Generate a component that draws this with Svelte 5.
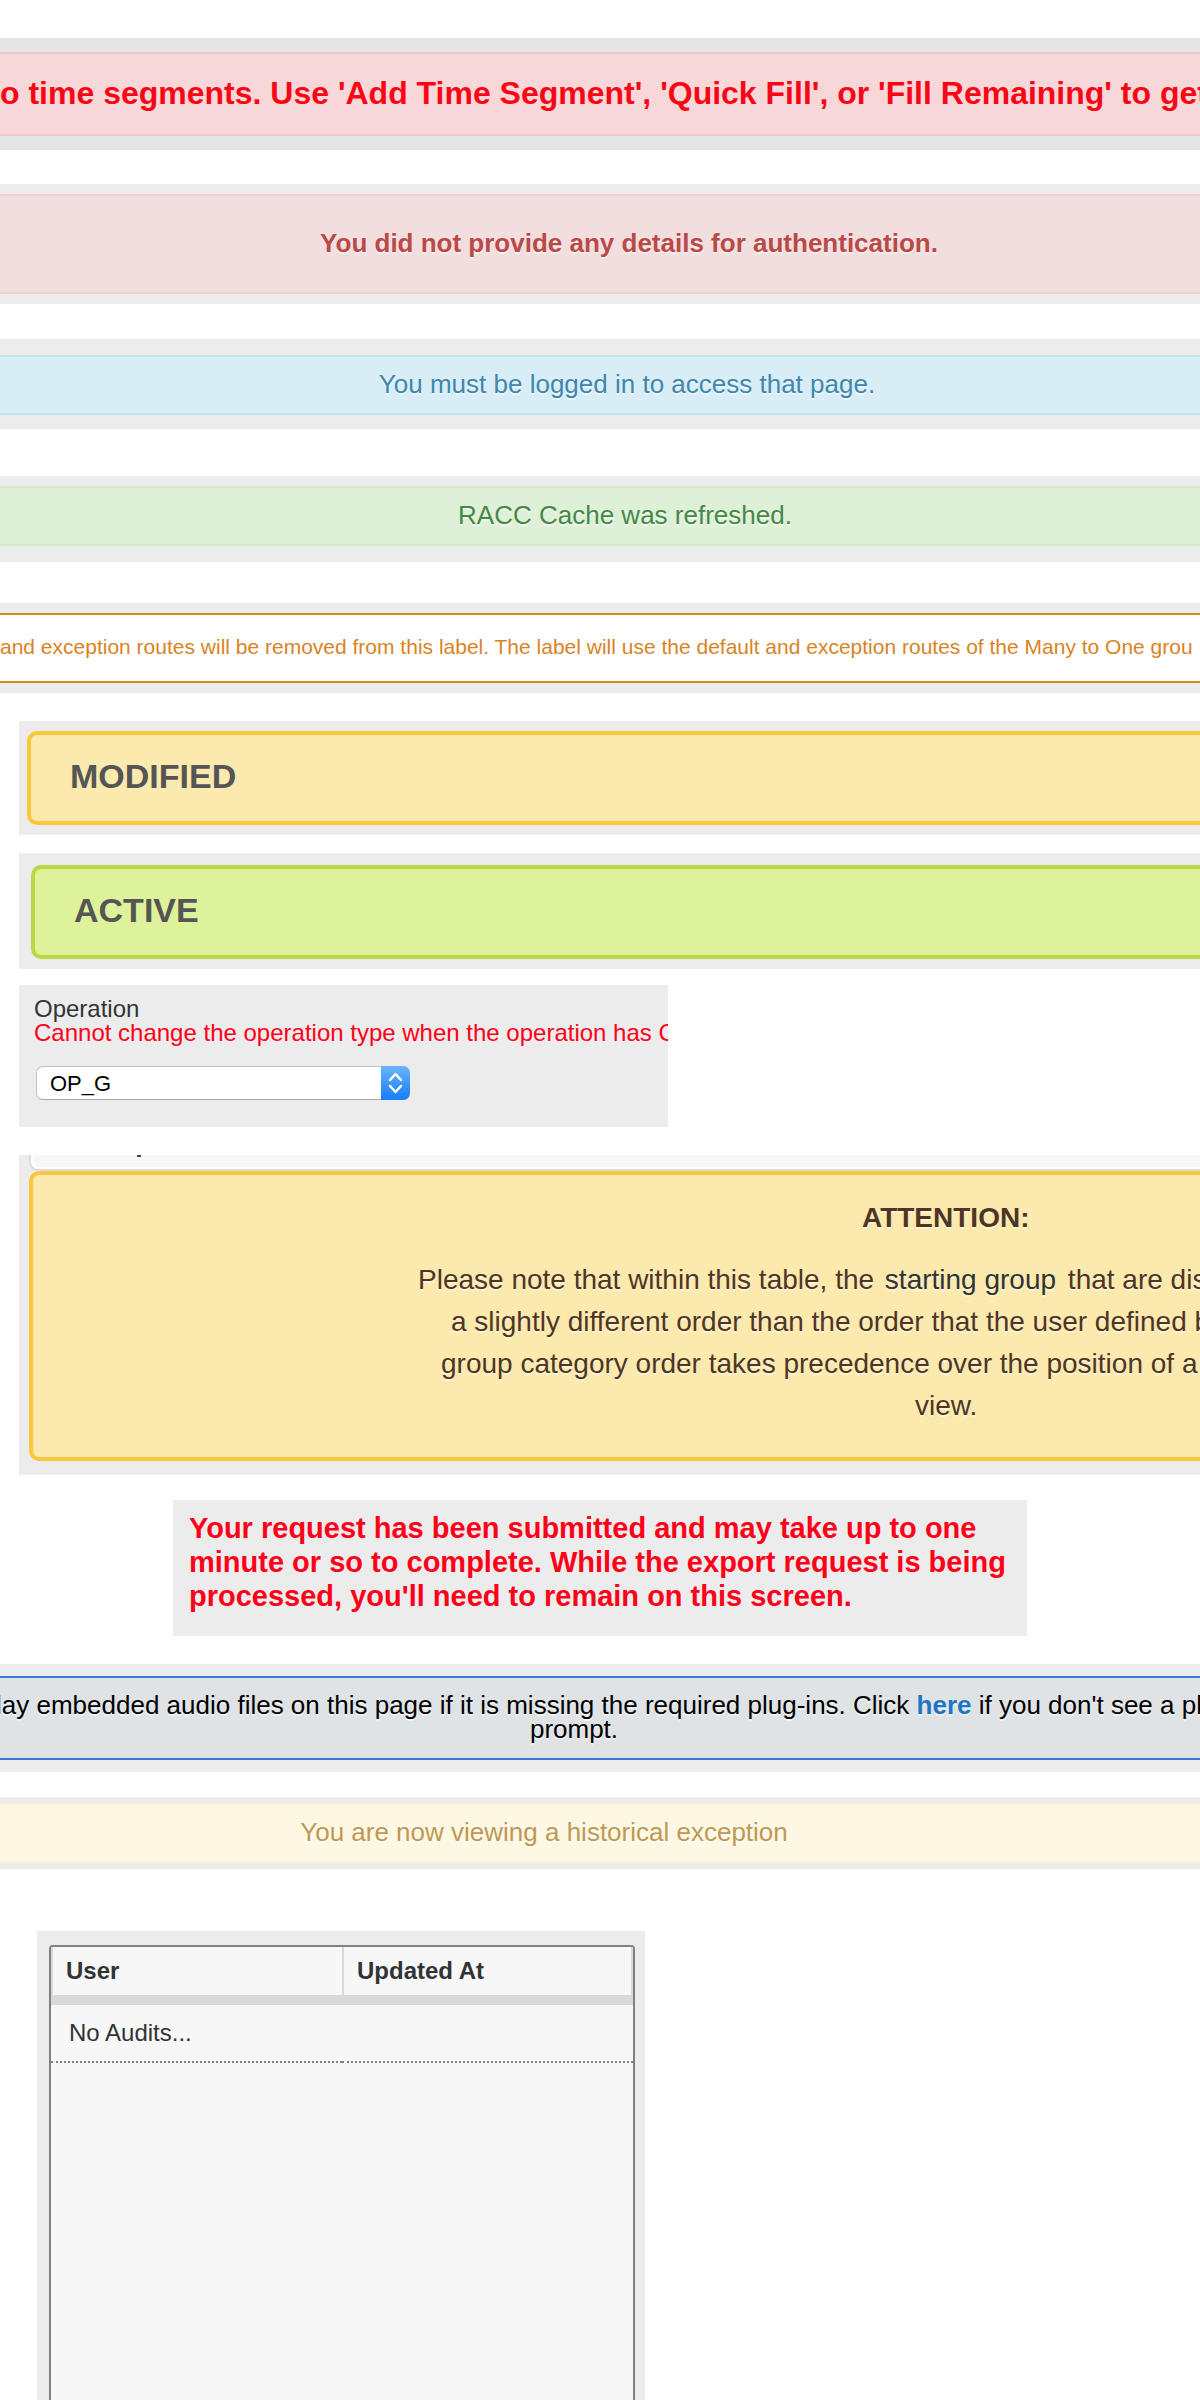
<script>
  let operation = $state('OP_G');
</script>

<main class="page">
  <section class="strip strip-segments">
    <p class="bar bar-segments">o time segments. Use 'Add Time Segment', 'Quick Fill', or 'Fill Remaining' to get</p>
  </section>

  <section class="strip strip-error">
    <p class="bar bar-error">You did not provide any details for authentication.</p>
  </section>

  <section class="strip strip-info">
    <p class="bar bar-info">You must be logged in to access that page.</p>
  </section>

  <section class="strip strip-success">
    <p class="bar bar-success">RACC Cache was refreshed.</p>
  </section>

  <section class="strip strip-routes">
    <p class="bar bar-routes">and exception routes will be removed from this label. The label will use the default and exception routes of the Many to One grou</p>
  </section>

  <section class="strip strip-modified">
    <h2 class="status status-modified">MODIFIED</h2>
  </section>

  <section class="strip strip-active">
    <h2 class="status status-active">ACTIVE</h2>
  </section>

  <section class="strip strip-operation">
    <label for="operation">Operation</label>
    <p class="field-error">Cannot change the operation type when the operation has C</p>
    <div class="select">
      <select id="operation" bind:value={operation}>
        <option>OP_G</option>
      </select>
      <svg class="stepper" viewBox="0 0 29 34" aria-hidden="true">
        <path d="M9 14 L14.5 8 L20 14 M9 20 L14.5 26 L20 20" />
      </svg>
    </div>
  </section>

  <section class="strip strip-attention">
    <div class="panel-foot"><i class="descender"></i></div>
    <div class="attention">
      <h3>ATTENTION:</h3>
      <p class="line line-one">Please note that within this table, the <span class="term">starting group</span> that are dis</p>
      <p class="line line-two">a slightly different order than the order that the user defined b</p>
      <p class="line line-three">group category order takes precedence over the position of a</p>
      <p class="line line-four">view.</p>
    </div>
  </section>

  <section class="strip strip-request">
    <p>Your request has been submitted and may take up to one minute or so to complete. While the export request is being processed, you'll need to remain on this screen.</p>
  </section>

  <section class="strip strip-plugin">
    <div class="plugin">
      <p class="plugin-text">lay embedded audio files on this page if it is missing the required plug-ins. Click <a href="#plugins">here</a> if you don't see a pl</p>
      <p class="plugin-end">prompt.</p>
    </div>
  </section>

  <section class="strip strip-history">
    <p class="bar bar-history">You are now viewing a historical exception</p>
  </section>

  <section class="strip strip-audits">
    <div class="audits">
      <table>
        <thead>
          <tr><th scope="col">User</th><th scope="col">Updated At</th></tr>
        </thead>
        <tbody>
          <tr><td>No Audits...</td><td></td></tr>
        </tbody>
      </table>
    </div>
  </section>
</main>

<style>
  :global(body) {
    background: #fff;
  }

  .page {
    display: flex;
    flex-direction: column;
    box-sizing: border-box;
    min-height: 100vh;
    padding-top: 38px;
    overflow: hidden;
    font-family: 'Liberation Sans', Arial, sans-serif;
    font-size: 26px;
    color: #333;
  }

  p, h2, h3 {
    margin: 0;
  }

  .strip {
    padding: 10px 0;
    background: #ececec;
    overflow: hidden;
  }

  .bar {
    border-style: solid;
    border-width: 2px 0;
    padding-bottom: 2px;
    text-align: center;
    line-height: 54px;
    white-space: nowrap;
    text-shadow: 0 2px 0 rgba(255, 255, 255, 0.5);
  }

  .strip-segments {
    margin-bottom: 34px;
    padding: 14px 0;
    background: #e5e5e5;
  }

  .bar-segments {
    border-color: #edc9cd;
    background: #f8d7d9;
    color: #f90616;
    font-size: 32px;
    font-weight: bold;
    line-height: 78px;
    text-align: left;
    text-shadow: none;
  }

  .strip-error {
    margin-bottom: 35px;
  }

  .bar-error {
    padding-left: 58px;
    border-color: #eed0d5;
    background: #f2dede;
    color: #b94a48;
    font-weight: bold;
    line-height: 94px;
  }

  .strip-info {
    margin-bottom: 47px;
    padding: 16px 0 14px;
  }

  .bar-info {
    padding-left: 54px;
    border-color: #bce8f1;
    background: #d9edf7;
    color: #3f87ad;
  }

  .strip-success {
    margin-bottom: 41px;
    padding-bottom: 16px;
  }

  .bar-success {
    padding-left: 50px;
    border-color: #d6e9c6;
    background: #dff0d8;
    color: #468847;
  }

  .strip-routes {
    margin-bottom: 28px;
  }

  .bar-routes {
    border-color: #d98324;
    background: #fff;
    color: #d98324;
    font-size: 21px;
    line-height: 64px;
    text-align: left;
    text-shadow: none;
  }

  .strip-modified {
    margin: 0 0 18px 19px;
    padding-left: 8px;
  }

  .strip-active {
    margin: 0 0 16px 19px;
    padding: 12px 0 10px 12px;
  }

  .status {
    border: 4px solid;
    border-right: 0;
    border-radius: 10px 0 0 10px;
    padding: 0 0 4px 39px;
    color: #555;
    font-size: 34px;
    line-height: 82px;
  }

  .status-modified {
    border-color: #fcc63d;
    background: #fbe9ad;
  }

  .status-active {
    border-color: #bcd743;
    background: #def29b;
  }

  .strip-operation {
    box-sizing: border-box;
    width: 649px;
    max-width: 100%;
    margin: 0 0 28px 19px;
    padding: 12px 0 27px 15px;
    font-size: 24px;
    line-height: 24px;
    white-space: nowrap;
  }

  label {
    display: block;
  }

  .field-error {
    color: #ff0019;
  }

  .select {
    position: relative;
    width: 374px;
    margin: 21px 0 0 2px;
  }

  select {
    display: block;
    box-sizing: border-box;
    width: 100%;
    height: 34px;
    padding: 0 40px 0 13px;
    border: 1px solid #c4c4c4;
    border-bottom-color: #a8a8a8;
    border-radius: 7px;
    appearance: none;
    background: #fff;
    color: #000;
    font-family: inherit;
    font-size: 22px;
  }

  .stepper {
    position: absolute;
    top: 0;
    right: 0;
    width: 29px;
    height: 34px;
    border-radius: 0 7px 7px 0;
    background: linear-gradient(#6cb3fa, #147efb);
    pointer-events: none;
  }

  .stepper path {
    fill: none;
    stroke: #fff;
    stroke-width: 2.5;
    stroke-linecap: round;
    stroke-linejoin: round;
  }

  .strip-attention {
    margin: 0 0 25px 19px;
    padding: 0 0 14px 10px;
  }

  .panel-foot {
    height: 12px;
    border: 2px solid #dcdcdf;
    border-width: 0 0 2px 2px;
    border-radius: 0 0 0 9px;
    background: #f7f7f7;
    box-shadow: inset 2px -2px 0 #fff;
    padding: 0 0 2px 106px;
  }

  .descender {
    display: block;
    width: 4px;
    height: 2px;
    background: #444;
  }

  .attention {
    border: 4px solid #fcc63d;
    border-right: 0;
    border-radius: 10px 0 0 10px;
    padding: 22px 0 30px;
    background: #fbe9ad;
    color: #4f3523;
    font-size: 28px;
    line-height: 42px;
    white-space: nowrap;
    text-shadow: 0 2px 0 rgba(255, 255, 255, 0.5);
  }

  .attention h3 {
    margin-bottom: 20px;
    padding-left: 829px;
    font-size: 28px;
  }

  .line-one {
    padding-left: 385px;
  }

  .line-two {
    padding-left: 418px;
  }

  .line-three {
    padding-left: 408px;
  }

  .line-four {
    padding-left: 882px;
  }

  .term {
    padding: 0 4px 0 3px;
    color: #333;
  }

  .strip-request {
    box-sizing: border-box;
    width: 854px;
    max-width: 100%;
    margin: 0 auto 28px;
    padding: 11px 16px 23px;
    color: #ff0019;
    font-size: 29px;
    font-weight: bold;
    line-height: 34px;
  }

  .strip-plugin {
    margin-bottom: 25px;
    padding: 12px 0;
  }

  .plugin {
    border: solid #3a78d6;
    border-width: 2px 0;
    padding: 15px 0 17px;
    background: #dfe3e5;
    color: #000;
    line-height: 24px;
    white-space: nowrap;
    text-shadow: 0 2px 0 rgba(255, 255, 255, 0.5);
  }

  .plugin-text {
    text-indent: -4px;
  }

  .plugin-end {
    padding-right: 52px;
    text-align: center;
  }

  a {
    color: #1f75c4;
    font-weight: bold;
    text-decoration: none;
  }

  .strip-history {
    margin-bottom: 62px;
    padding: 6px 0;
  }

  .bar-history {
    padding-right: 112px;
    border-color: #fbeed5;
    background: #fcf8e3;
    color: #c09853;
  }

  .strip-audits {
    display: flex;
    flex: 1;
    box-sizing: border-box;
    width: 608px;
    max-width: 100%;
    margin-left: 37px;
    padding: 14px 10px 0 12px;
    font-size: 24px;
  }

  .audits {
    flex: 1;
    border: 2px solid #808080;
    border-bottom: 0;
    border-radius: 4px 4px 0 0;
    background: #f7f7f7;
  }

  table {
    width: 100%;
    table-layout: fixed;
    border-collapse: separate;
    border-spacing: 0;
  }

  th {
    height: 48px;
    padding: 0 0 0 13px;
    border-left: 2px solid #d9d9d9;
    border-bottom: 10px solid #d9d9d9;
    text-align: left;
  }

  th:last-child {
    border-right: 2px solid #d9d9d9;
  }

  td {
    height: 56px;
    padding: 0 0 0 18px;
    border-bottom: 2px dotted #808080;
  }
</style>
